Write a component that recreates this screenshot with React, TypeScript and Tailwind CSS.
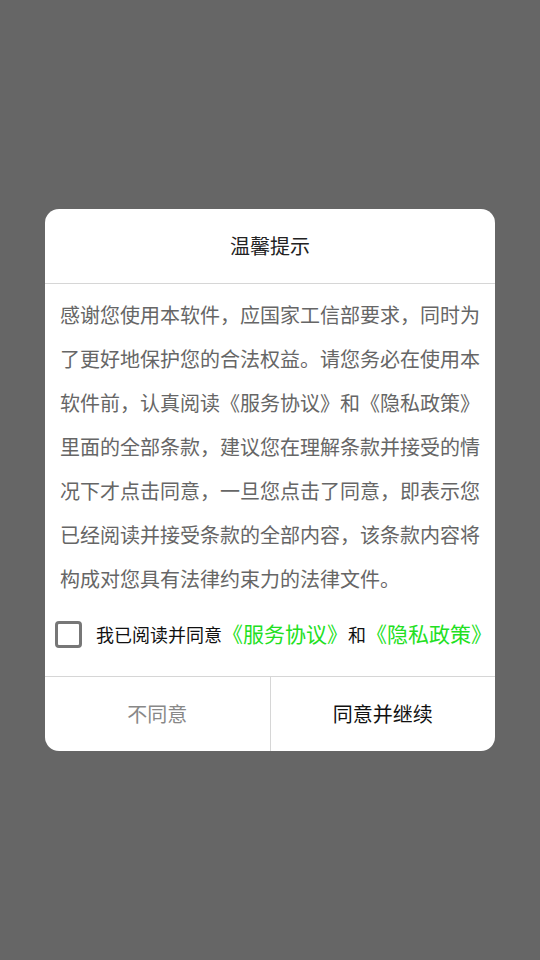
import React from "react";

export default function App() {
  const font = { fontFamily: '"Noto Sans CJK SC", "Noto Sans", sans-serif' };
  return (
    <div className="w-[540px] h-[960px] bg-[#666666] flex items-center justify-center" style={font}>
      <div className="w-[450px] bg-white rounded-[14px] overflow-hidden">
        <div className="h-[75px] flex items-center justify-center text-[20px] text-[#222222] border-b border-[#d6d6d6]">
          温馨提示
        </div>
        <div className="px-[15px] pt-[9px] text-[20px] leading-[44px] text-[#666666]">
          感谢您使用本软件，应国家工信部要求，同时为了更好地保护您的合法权益。请您务必在使用本软件前，认真阅读《服务协议》和《隐私政策》里面的全部条款，建议您在理解条款并接受的情况下才点击同意，一旦您点击了同意，即表示您已经阅读并接受条款的全部内容，该条款内容将构成对您具有法律约束力的法律文件。
        </div>
        <div className="flex items-center pl-[10px] pt-[10px] pb-[19px] h-[75px]">
          <div className="w-[27px] h-[27px] border-[3px] border-[#777777] rounded-[4px] shrink-0" />
          <div className="ml-[14px] flex items-center whitespace-nowrap">
            <span className="text-[18px] text-[#111111]">我已阅读并同意</span>
            <span className="text-[21px] text-[#22e022]">《服务协议》</span>
            <span className="text-[18px] text-[#111111]">和</span>
            <span className="text-[21px] text-[#22e022]">《隐私政策》</span>
          </div>
        </div>
        <div className="flex h-[75px] border-t border-[#d6d6d6]">
          <div className="flex-1 flex items-center justify-center text-[20px] text-[#888888] border-r border-[#d6d6d6]">
            不同意
          </div>
          <div className="flex-1 flex items-center justify-center text-[20px] text-[#111111]">
            同意并继续
          </div>
        </div>
      </div>
    </div>
  );
}
